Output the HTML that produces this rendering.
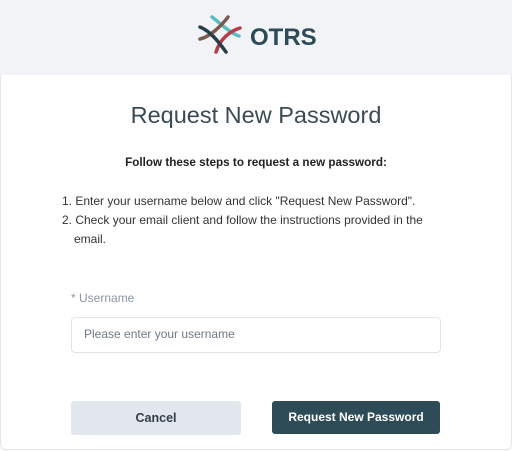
<!DOCTYPE html><html><head><style>
body{margin:0;width:512px;height:451px;background:#fff;font-family:"Liberation Sans",sans-serif;overflow:hidden}
.card{position:absolute;left:0;top:0;width:510px;height:449px;border:1px solid #e3e6ea;border-top:none;border-radius:0 0 6px 6px}
.hd{position:absolute;left:0;top:0;width:512px;height:75px;background:#f1f3f7}
.t{position:absolute;left:0;width:512px;text-align:center}
</style></head><body>
<div class="card"></div>
<div class="hd">
<svg style="position:absolute;left:196px;top:15px" width="50" height="40" viewBox="0 0 50 40">
<path d="M16 2 C24 8 34 18 43 21" stroke="#5bbcbf" stroke-width="3.5" fill="none" stroke-linecap="round"/>
<path d="M32 2 C26 10 14 22 4 24" stroke="#7a5a4e" stroke-width="3.5" fill="none" stroke-linecap="round"/>
<path d="M44 13 C34 16 24 24 20 37" stroke="#b73a48" stroke-width="3.5" fill="none" stroke-linecap="round"/>
<path d="M4 12 C14 16 22 26 30 37" stroke="#273e48" stroke-width="3.5" fill="none" stroke-linecap="round"/>
</svg>
<div style="position:absolute;left:250px;top:24px;font-size:24px;font-weight:bold;color:#2c4a57">OTRS</div>
</div>
<div class="t" style="top:102px;font-size:23.5px;color:#3a4b56">Request New Password</div>
<div class="t" style="top:156px;font-size:11.7px;font-weight:bold;color:#222">Follow these steps to request a new password:</div>
<div style="position:absolute;left:62px;top:192px;width:390px;font-size:12px;line-height:19px;color:#333">
<div>1. Enter your username below and click "Request New Password".</div>
<div>2. Check your email client and follow the instructions provided in the</div>
<div style="padding-left:12px">email.</div></div>
<div style="position:absolute;left:71px;top:291px;font-size:12px;color:#8a96a3">* Username</div>
<div style="position:absolute;left:71px;top:317px;width:368px;height:34px;border:1px solid #e0e3e8;border-radius:4px"></div>
<div style="position:absolute;left:84px;top:327px;font-size:12px;color:#6e7a86">Please enter your username</div>
<div style="position:absolute;left:71px;top:401px;width:170px;height:34px;background:#e2e6ed;border-radius:3px;text-align:center;line-height:34px;font-size:12.5px;font-weight:bold;color:#333d48">Cancel</div>
<div style="position:absolute;left:272px;top:401px;width:168px;height:33px;background:#2e4c57;border-radius:3px;text-align:center;line-height:33px;font-size:12px;font-weight:bold;color:#fff">Request New Password</div>
</body></html>
